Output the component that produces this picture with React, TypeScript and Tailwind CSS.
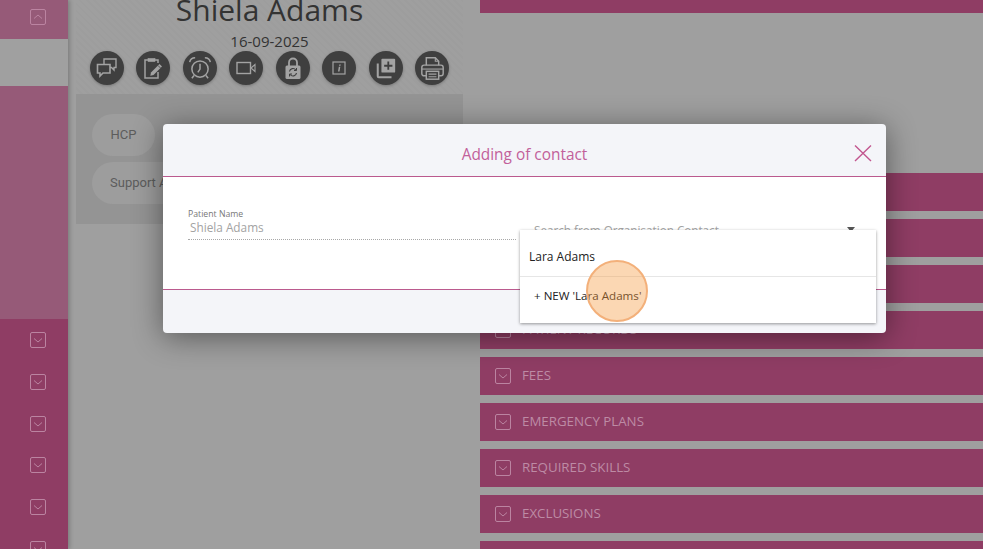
import React from 'react';

const Chevron = ({ up = false }: { up?: boolean }) => (
    <svg viewBox="0 0 16 16" className="w-4 h-4 text-[#bb84a1]" fill="none" stroke="currentColor">
        <rect x="0.5" y="0.5" width="15" height="15" rx="1.5" strokeWidth="1" />
        <path d={up ? "M4 9.5 8 6l4 3.5" : "M4 6.5 8 10l4-3.5"} strokeWidth="1" />
    </svg>
);

const ChatIcon = () => (
    <svg viewBox="0 0 24 24" className="w-6 h-6" fill="none" stroke="currentColor" strokeWidth="1.4">
        <path d="M9 8V3h12v8.5h-2v2.5l-2.5-2.5H15" />
        <path d="M2.5 8.5h12.5V17H8l-3 3v-3H2.5z" strokeWidth="1.6" />
    </svg>
);

const NoteIcon = () => (
    <svg viewBox="0 0 24 24" className="w-6 h-6" fill="none" stroke="currentColor" strokeWidth="1.5">
        <path d="M7 4H4v18h13v-6" />
        <path d="M14 4h3v3" />
        <rect x="7" y="2.500" width="7" height="3" fill="currentColor" strokeWidth="0.6" />
        <path d="M10 16.500 18.500 8l2.500 2.500-8.500 8.500-3.200.7z" fill="currentColor" stroke="none" />
        <path d="m17 9.500 2.500 2.500" stroke="#3f3f3f" strokeWidth="0.8" />
    </svg>
);

const AlarmIcon = () => (
    <svg viewBox="0 0 24 24" className="w-[26px] h-[26px]" fill="none" stroke="currentColor" strokeWidth="1.4">
        <circle cx="12" cy="13" r="7.500" />
        <path d="M12 8v5l-2 3" />
        <path d="M2.500 6.500C3 4 5 2.500 7.500 2.500M21.500 6.500C21 4 19 2.500 16.500 2.500" />
        <path d="m6.500 19-2 2.500M17.500 19l2 2.500" />
    </svg>
);

const VideoIcon = () => (
    <svg viewBox="0 0 24 24" className="w-6 h-6" fill="none" stroke="currentColor" strokeWidth="1.4">
        <rect x="3" y="6.500" width="13.500" height="11" />
        <path d="M17 12 21 8.500v7z" strokeWidth="1.1" />
    </svg>
);

const LockIcon = () => (
    <svg viewBox="0 0 24 24" className="w-6 h-6" fill="none" stroke="currentColor">
        <path d="M8 10V6.500a4 4 0 0 1 8 0V10" strokeWidth="1.800" />
        <rect x="4.500" y="9.500" width="15" height="13.500" rx="1.500" fill="currentColor" stroke="none" />
        <path d="M8.500 15.500a3.500 3.500 0 0 1 6.300-1.500M15.500 17a3.500 3.500 0 0 1-6.300 1.500" stroke="#3f3f3f" strokeWidth="1.200" />
        <path d="M15.500 12v2.500H13M8.500 20.500v-2.500H11" stroke="#3f3f3f" strokeWidth="1" />
    </svg>
);

const InfoIcon = () => (
    <svg viewBox="0 0 24 24" className="w-6 h-6" fill="none" stroke="currentColor">
        <rect x="6" y="6" width="12" height="12" strokeWidth="1.200" />
        <path d="M12.300 8.400h1.500l-.3 1.400H12zM11.800 10.800h1.500l-.8 4.600H11z" fill="currentColor" stroke="none" />
    </svg>
);

const AddIcon = () => (
    <svg viewBox="0 0 24 24" className="w-[22px] h-[22px]" fill="none" stroke="currentColor">
        <rect x="7" y="2" width="15" height="15" rx="1" fill="currentColor" stroke="none" />
        <path d="M14.500 5v9M10 9.500h9" stroke="#3f3f3f" strokeWidth="2" />
        <path d="M3 7v14a1 1 0 0 0 1 1h14" strokeWidth="2.200" />
    </svg>
);

const PrintIcon = () => (
    <svg viewBox="0 0 24 24" className="w-[27px] h-[27px]" fill="none" stroke="currentColor" strokeWidth="1.300">
        <path d="M6.500 9V2.500h8l3 3V9" />
        <path d="M14.500 2.500v3h3" strokeWidth="1" />
        <rect x="2.500" y="9" width="19" height="9.500" rx="2" />
        <path d="M2.500 12.500h19" strokeWidth="1" />
        <rect x="6.500" y="14.500" width="11" height="7" fill="#3f3f3f" />
        <path d="M8.500 17h7M8.500 19.300h7" strokeWidth="1" />
    </svg>
);

const actionIcons = [ChatIcon, NoteIcon, AlarmIcon, VideoIcon, LockIcon, InfoIcon, AddIcon, PrintIcon];

const sections = [
    "",
    "",
    "",
    "PATIENT RECORDS",
    "FEES",
    "EMERGENCY PLANS",
    "REQUIRED SKILLS",
    "EXCLUSIONS",
    "",
];

const App: React.FC = () => {
    return (
        <div className="relative w-[983px] h-[549px] overflow-hidden flex bg-[#9f9f9f] font-['Open_Sans',sans-serif]">

            {/* Left rail */}
            <div className="w-[68px] h-[549px] overflow-hidden shrink-0 flex flex-col shadow-[2px_0_4px_rgba(0,0,0,0.2)] z-10">
                <div className="h-[39px] shrink-0 bg-[#965a78] flex items-center justify-end pr-[22px] pb-[5px]">
                    <Chevron up />
                </div>
                <div className="h-[47px] shrink-0 bg-[#a0a0a0]" />
                <div className="h-[233px] shrink-0 bg-[#965a78]" />
                <div className="h-[230px] shrink-0 bg-[#8f3d64] flex flex-col items-end pr-[22px] pt-[13px] gap-[25.800px]">
                    {[0, 1, 2, 3, 4, 5].map((i) => (
                        <div key={i} className="shrink-0">
                            <Chevron />
                        </div>
                    ))}
                </div>
            </div>

            {/* Patient summary */}
            <div className="w-[412px] shrink-0 pl-2 pr-[17px] flex flex-col items-center">
                <div className="w-full h-[94px] shrink-0 flex flex-col items-center bg-[repeating-linear-gradient(45deg,#9f9f9f_0,#9f9f9f_3px,#9d9d9d_3px,#9d9d9d_5px)]">
                    <div className="-mt-[10px] h-[40px] shrink-0 leading-[40px] text-[30px] text-[#333333] whitespace-nowrap">Shiela Adams</div>
                    <div className="mt-[1px] h-[20px] shrink-0 leading-[20px] text-[15px] text-[#333333]">16-09-2025</div>
                    <div className="w-[360px] h-[34px] shrink-0 flex justify-between">
                        {actionIcons.map((Icon, i) => (
                            <div key={i} className="w-[34px] h-[34px] rounded-full bg-[#3f3f3f] flex items-center justify-center text-[#a3a3a3] shadow-[0_1px_3px_rgba(0,0,0,0.25)]">
                                <Icon />
                            </div>
                        ))}
                    </div>
                </div>
                <div className="w-full h-[130px] shrink-0 bg-[#949494] px-4 pt-5 flex flex-col gap-[6px] font-['Roboto',sans-serif] text-[13px] text-[#5c5c5c]">
                    <div className="w-[63px] h-[42px] rounded-full bg-[#9d9d9d] flex items-center justify-center">HCP</div>
                    <div className="w-[200px] h-[42px] rounded-full bg-[#9d9d9d] flex items-center pl-[18px]">Support Assistant</div>
                </div>
            </div>

            {/* Accordion column */}
            <div className="flex-1 flex flex-col">
                <div className="h-[13px] bg-[#8f3d64] shrink-0" />
                <div className="mt-[160px] flex flex-col gap-2">
                    {sections.map((title, i) => (
                        <div key={i} className="h-[38px] shrink-0 bg-[#8f3d64] flex items-center pl-[15px] gap-[11px] text-[13.300px] text-[#bd8ba5]">
                            <Chevron />
                            <span>{title}</span>
                        </div>
                    ))}
                </div>
            </div>

            {/* Modal */}
            <div className="absolute left-[163px] top-[124px] w-[723px] h-[209px] rounded-[4px] bg-[#f4f5f9] flex flex-col z-20 shadow-[0_4px_30px_rgba(0,0,0,0.45)]">
                <div className="h-[53px] shrink-0 border-b border-[#bb5a8e] flex items-center justify-center pt-[10px] text-[15.400px] text-[#c2609a] relative">
                    Adding of contact
                    <svg viewBox="0 0 18 18" className="absolute right-[14px] top-[20px] w-[18px] h-[18px]" fill="none" stroke="#c2568f" strokeWidth="1.400">
                        <path d="M1 1.500 17 17M17 1.500 1 17" />
                    </svg>
                </div>
                <div className="h-[113px] shrink-0 bg-white border-b border-[#bb5a8e] px-[25px] pt-[32px] flex gap-[17px]">
                    <div className="w-[328px] h-[31px] border-b border-dotted border-[#a8a8a8]">
                        <div className="text-[8.700px] leading-[10px] text-[#777777]">Patient Name</div>
                        <div className="pl-[2px] text-[11.800px] leading-[17px] text-[#a3a3a3]">Shiela Adams</div>
                    </div>
                    <div className="flex-1 flex justify-between pt-[12px] pr-[6px] text-[11.700px] text-[#a3a3a3]">
                        <span className="pl-[1px] leading-[18px]">Search from Organisation Contact</span>
                        <span className="mt-[6px] border-x-[4px] border-t-[5px] border-x-transparent border-t-[#555555] h-0" />
                    </div>
                </div>

                {/* Dropdown */}
                <div className="absolute left-[357px] top-[106px] w-[356px] h-[93px] bg-white shadow-[0_1px_3px_rgba(0,0,0,0.4)] flex flex-col text-[#222222]">
                    <div className="h-[47px] border-b border-[#e6e6e6] pl-[9px] pt-[15px] text-[12px] leading-[24px]">Lara Adams</div>
                    <div className="pl-[14px] pt-[7px] text-[11.600px] leading-[24px]">+ NEW 'Lara Adams'</div>
                </div>

                {/* Click highlight */}
                <div className="absolute left-[423px] top-[136px] w-[62px] h-[62px] rounded-full bg-[#f59a42]/40 border-2 border-[#f3b07a]" />
            </div>
        </div>
    );
};

export default App;
